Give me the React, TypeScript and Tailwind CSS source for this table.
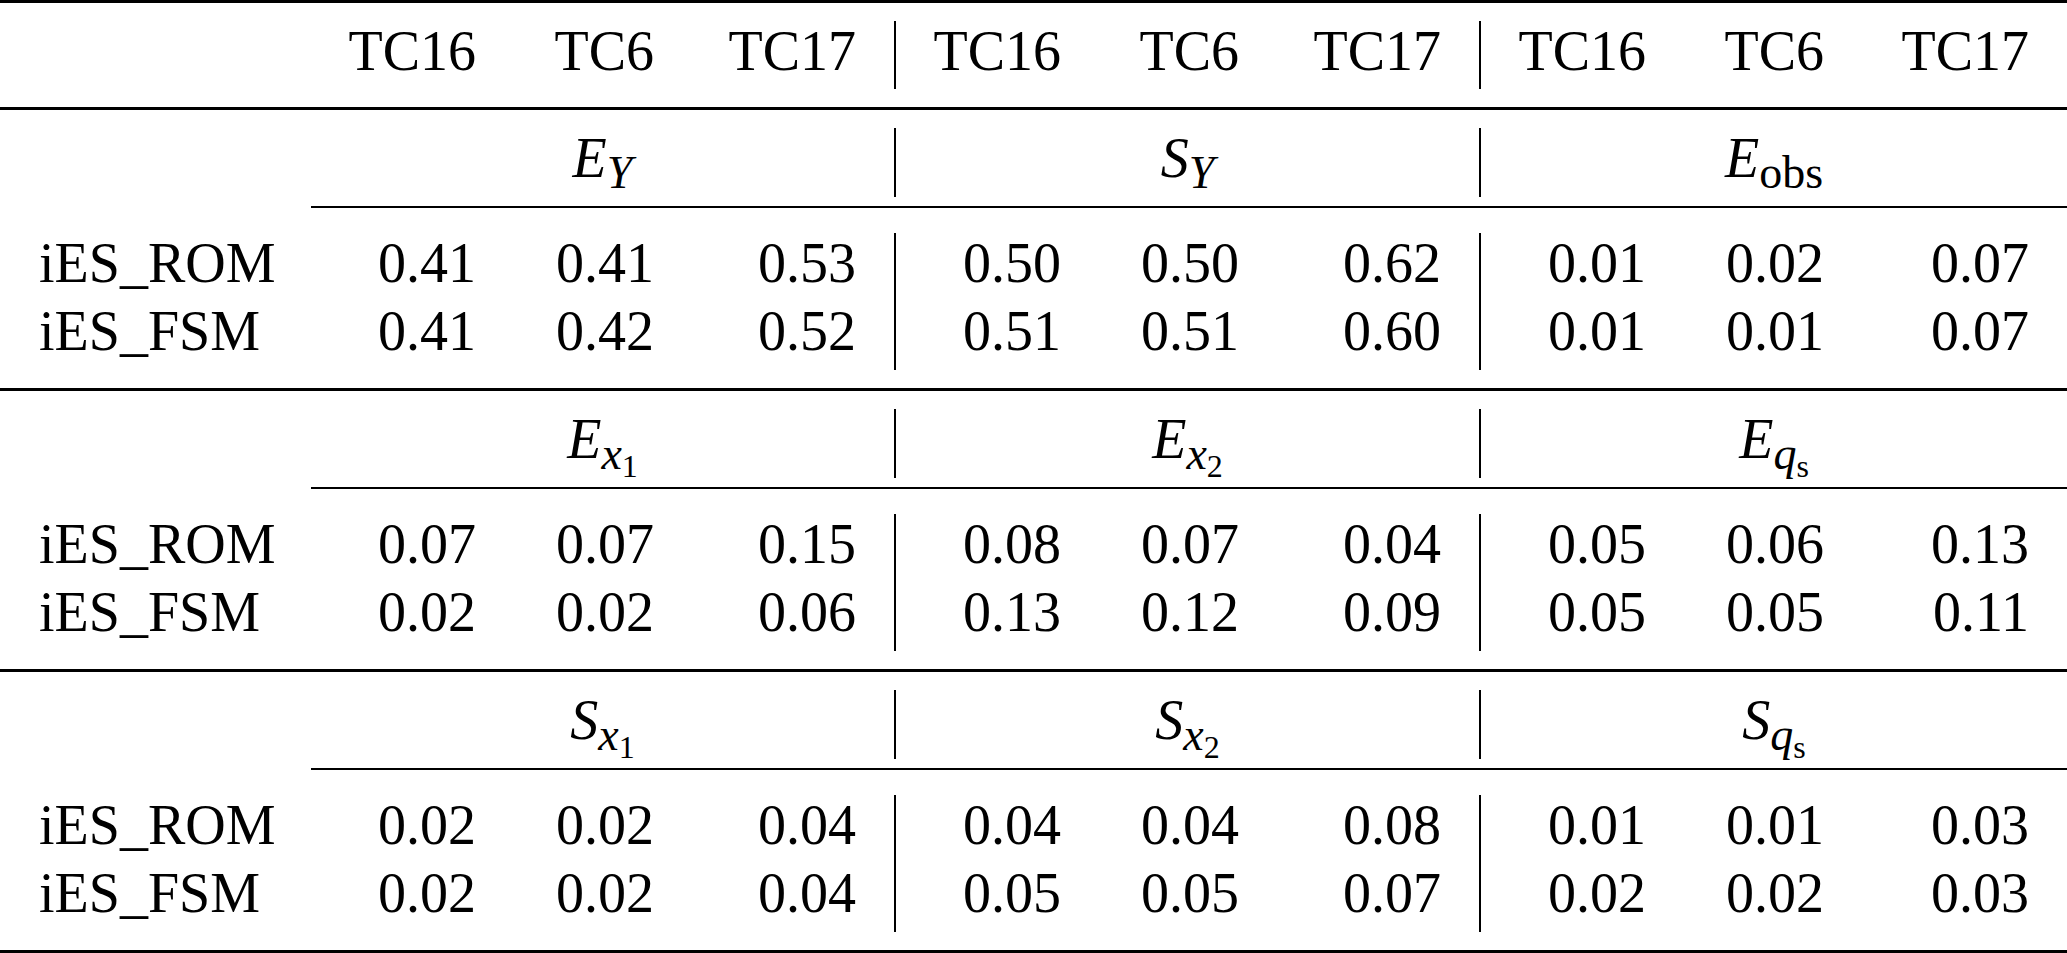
import React from "react";

const groups = [0, 1, 2];
const cols = ["TC16", "TC6", "TC17"];
const colW = ["w-[202px]", "w-[178px]", "w-[203px]"];

const blocks = [
  {
    heads: [
      { base: "E", sub: "Y", subItalic: true },
      { base: "S", sub: "Y", subItalic: true },
      { base: "E", sub: "obs", subItalic: false },
    ],
    rows: [
      ["iES_ROM", "0.41", "0.41", "0.53", "0.50", "0.50", "0.62", "0.01", "0.02", "0.07"],
      ["iES_FSM", "0.41", "0.42", "0.52", "0.51", "0.51", "0.60", "0.01", "0.01", "0.07"],
    ],
  },
  {
    heads: [
      { base: "E", sub: "x", subItalic: true, subsub: "1" },
      { base: "E", sub: "x", subItalic: true, subsub: "2" },
      { base: "E", sub: "q", subItalic: true, subsub: "s" },
    ],
    rows: [
      ["iES_ROM", "0.07", "0.07", "0.15", "0.08", "0.07", "0.04", "0.05", "0.06", "0.13"],
      ["iES_FSM", "0.02", "0.02", "0.06", "0.13", "0.12", "0.09", "0.05", "0.05", "0.11"],
    ],
  },
  {
    heads: [
      { base: "S", sub: "x", subItalic: true, subsub: "1" },
      { base: "S", sub: "x", subItalic: true, subsub: "2" },
      { base: "S", sub: "q", subItalic: true, subsub: "s" },
    ],
    rows: [
      ["iES_ROM", "0.02", "0.02", "0.04", "0.04", "0.04", "0.08", "0.01", "0.01", "0.03"],
      ["iES_FSM", "0.02", "0.02", "0.04", "0.05", "0.05", "0.07", "0.02", "0.02", "0.03"],
    ],
  },
];

type Head = { base: string; sub: string; subItalic: boolean; subsub?: string };

function Symbol({ h }: { h: Head }) {
  return (
    <span>
      <span className="italic">{h.base}</span>
      <span className={`relative top-[11px] text-[46px] leading-none ${h.subItalic ? "italic" : ""}`}>
        {h.sub}
        {h.subsub && (
          <span className="relative top-[8px] text-[32px] leading-none not-italic">{h.subsub}</span>
        )}
      </span>
    </span>
  );
}

function Rule({ thin }: { thin?: boolean }) {
  return <div className={thin ? "h-[2px] bg-black ml-[311px]" : "h-[3px] bg-black"} />;
}

function Block({ block }: { block: (typeof blocks)[number] }) {
  return (
    <div>
      <div className="flex h-[96px]">
        <div className="w-[311px] shrink-0" />
        {groups.map((g) => (
          <div key={g} className="flex">
            <div className={`${g < 2 ? "w-[583px]" : "w-[586px]"} pt-[17px] text-center leading-[62px]`}>
              <Symbol h={block.heads[g]} />
            </div>
            {g < 2 && <div className="mt-[18px] h-[69px] w-[2px] bg-black" />}
          </div>
        ))}
      </div>
      <Rule thin />
      <div className="flex h-[180px] pt-[21px]">
        <div className="w-[311px] shrink-0 pl-[39px]">
          {block.rows.map((r) => (
            <div key={r[0]} className="h-[68px] leading-[68px]">{r[0]}</div>
          ))}
        </div>
        {groups.map((g) => (
          <div key={g} className="flex">
            {cols.map((_, c) => (
              <div
                key={c}
                className={`${g === 2 && c === 2 ? "w-[206px]" : colW[c]} text-right ${c === 2 ? "pr-[38px]" : "pr-[37px]"}`}
              >
                {block.rows.map((r, ri) => (
                  <div key={ri} className="h-[68px] leading-[68px]">{r[1 + g * 3 + c]}</div>
                ))}
              </div>
            ))}
            {g < 2 && <div className="mt-[4px] h-[137px] w-[2px] bg-black" />}
          </div>
        ))}
      </div>
    </div>
  );
}

export default function App() {
  return (
    <div className="w-[2067px] h-[953px] bg-white text-black font-['Liberation_Serif',serif] text-[56px] overflow-hidden">
      <Rule />
      <div className="flex h-[104px]">
        <div className="w-[311px] shrink-0" />
        {groups.map((g) => (
          <div key={g} className="flex">
            {cols.map((name, c) => (
              <div
                key={c}
                className={`${g === 2 && c === 2 ? "w-[206px]" : colW[c]} pt-[17px] text-right leading-[62px] ${c === 2 ? "pr-[38px]" : "pr-[37px]"}`}
              >
                {name}
              </div>
            ))}
            {g < 2 && <div className="mt-[18px] h-[68px] w-[2px] bg-black" />}
          </div>
        ))}
      </div>
      <Rule />
      {blocks.map((b, i) => (
        <div key={i}>
          <Block block={b} />
          <Rule />
        </div>
      ))}
    </div>
  );
}
